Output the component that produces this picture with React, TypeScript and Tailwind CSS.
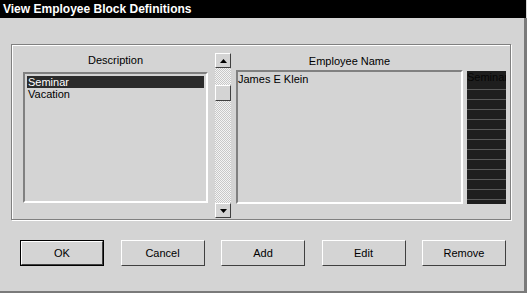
export default function App() {
  const font = { fontFamily: '"Liberation Sans", Arial, sans-serif' };
  return (
    <div className="w-[527px] h-[293px] bg-[#d4d4d4] flex flex-col text-[11px] text-black" style={font}>
      <div className="h-[18px] bg-black text-white font-bold text-[12px] leading-[18px] pl-[3px] mr-[1px]">
        View Employee Block Definitions
      </div>
      <div className="flex-1 flex flex-col border-r-[3px] border-b-[2px] border-[#7a7a7a]">
        {/* group box */}
        <div className="ml-[11px] mt-[26px] w-[500px] h-[176px] border border-[#808080] shadow-[1px_1px_0_#fff,inset_1px_1px_0_#fff] flex items-start">
          <div className="ml-[11px] w-[185px] flex flex-col">
            <div className="h-[27px] pt-[9px] text-center leading-[13px]">Description</div>
            <div className="h-[131px] border-2 border-[#808080] border-b-white border-r-white pt-[2px] px-[2px]">
              <div className="h-[12px] leading-[12px] bg-[#2b2b2b] text-white pl-[1px]">Seminar</div>
              <div className="h-[12px] leading-[12px] pl-[1px]">Vacation</div>
            </div>
          </div>
          <div className="ml-[7px] mt-[8px] w-[16px] h-[165px] flex flex-col bg-[repeating-conic-gradient(#f4f4f4_0_25%,#c8c8c8_0_50%)] bg-[length:2px_2px]">
            <div className="h-[15px] bg-[#d4d4d4] border border-t-white border-l-white border-r-[#404040] border-b-[#404040] flex items-center justify-center">
              <svg width="7" height="4" viewBox="0 0 7 4"><path d="M3.5 0L7 4H0z" fill="#000" /></svg>
            </div>
            <div className="h-[17px]" />
            <div className="h-[16px] bg-[#d4d4d4] border border-t-white border-l-white border-r-[#404040] border-b-[#404040]" />
            <div className="flex-1" />
            <div className="h-[15px] bg-[#d4d4d4] border border-t-white border-l-white border-r-[#404040] border-b-[#404040] flex items-center justify-center">
              <svg width="7" height="4" viewBox="0 0 7 4"><path d="M0 0H7L3.5 4z" fill="#000" /></svg>
            </div>
          </div>
          <div className="ml-[5px] w-[227px] flex flex-col">
            <div className="h-[25px] pt-[10px] text-center leading-[13px]">Employee Name</div>
            <div className="h-[134px] border-2 border-[#808080] border-b-white border-r-white leading-[12px] pt-[1px]">
              James E Klein
            </div>
          </div>
          <div className="ml-[4px] mt-[26px] w-[39px] h-[133px] bg-[#1e1e1e] overflow-hidden flex flex-col">
            <div className="h-[20px] border-b border-[#5a5a5a] leading-[12px] -mt-[1px] pt-[1px] whitespace-nowrap text-[#050505]">Seminar</div>
            {Array.from({ length: 11 }).map((_, i) => (
              <div key={i} className="h-[10px] shrink-0 border-b border-[#5a5a5a]" />
            ))}
          </div>
        </div>
        {/* buttons */}
        <div className="mt-[20px] ml-[20px] w-[486px] flex justify-between">
          <button className="w-[84px] h-[26px] border border-black bg-[#d4d4d4]">
            <div className="h-full border border-t-white border-l-white border-r-[#404040] border-b-[#404040] flex items-center justify-center">OK</div>
          </button>
          {["Cancel", "Add", "Edit", "Remove"].map((t) => (
            <button key={t} className="w-[84px] h-[26px] bg-[#d4d4d4] border border-t-white border-l-white border-r-[#404040] border-b-[#404040] flex items-center justify-center">
              {t}
            </button>
          ))}
        </div>
      </div>
    </div>
  );
}
